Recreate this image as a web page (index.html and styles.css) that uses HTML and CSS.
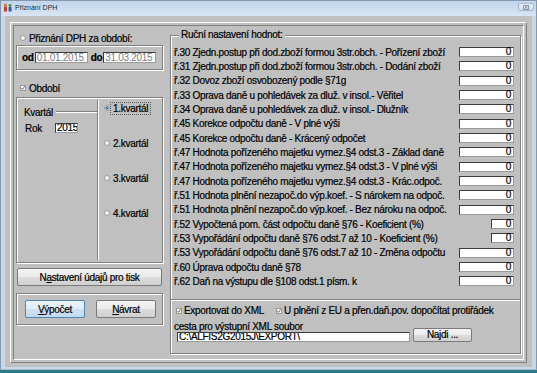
FILE: index.html
```html
<!doctype html>
<html lang="cs">

<head>
  <title>Přiznání DPH</title>
  <meta charset="utf-8">
  <link rel="stylesheet" href="styles.css">
</head>

<body>
  <div class="window">
    <div class="titlebar">
      <svg class="app-icon" width="10" height="9" viewBox="0 0 10 9">
        <circle cx="2.5" cy="2" r="1.5" fill="#d9772b" />
        <rect x="1" y="3.5" width="3" height="5" fill="#c0452a" />
        <circle cx="7" cy="2.5" r="1.4" fill="#3d8a3a" />
        <rect x="5.6" y="4" width="3" height="4.5" fill="#2d5fa8" />
      </svg>
      <span class="caption">Přiznání DPH</span>
      <div class="close">
        <svg width="6" height="5" viewBox="0 0 6 5">
          <rect x="0.5" y="0.5" width="5" height="4" fill="none" stroke="#8d9cae" />
          <path d="M1.5 1.2 L4.5 3.8 M4.5 1.2 L1.5 3.8" stroke="#6b7a8c" stroke-width="0.8" />
        </svg>
      </div>
    </div>

    <div class="client">
      <div class="frame">
        <div class="panel">

          <div class="left">
            <div class="opt-row">
              <span class="radio"></span>
              <span>Přiznání DPH za období:</span>
            </div>
            <div class="dates box">
              <b>od</b>
              <span class="edit date">01.01.2015</span>
              <b class="do">do</b>
              <span class="edit date">31.03.2015</span>
            </div>
            <div class="opt-row check-row">
              <svg class="check" width="6" height="6" viewBox="0 0 6 6">
                <rect x="0.5" y="0.5" width="5" height="5" fill="#f3f3f3" stroke="#9a9a9a" />
                <path d="M1.4 3 L2.6 4.3 L4.7 1.4" fill="none" stroke="#55606c" stroke-width="0.9" />
              </svg>
              <span>Období</span>
            </div>
            <div class="kvartal box">
              <div class="kv-left">
                <div class="kv-title"><span>Kvartál</span><span class="kv-line"></span></div>
                <div class="kv-rok"><span>Rok</span><span class="edit rok">2015</span></div>
              </div>
              <div class="kv-divider"></div>
              <div class="kv-right">
                <div class="kv-opt"><span class="radio on"></span><span class="kv-label focus">1.kvartál</span></div>
                <div class="kv-opt"><span class="radio"></span><span class="kv-label">2.kvartál</span></div>
                <div class="kv-opt"><span class="radio"></span><span class="kv-label">3.kvartál</span></div>
                <div class="kv-opt"><span class="radio"></span><span class="kv-label">4.kvartál</span></div>
              </div>
            </div>
            <button class="btn tisk">N<u>a</u>stavení údajů pro tisk</button>
            <div class="actions box">
              <button class="btn default"><u>V</u>ýpočet</button>
              <button class="btn"><u>N</u>ávrat</button>
            </div>
          </div>

          <div class="manual">
            <div class="legend">Ruční nastavení hodnot:</div>
            <div class="rows">
              <div class="row"><span class="lbl">ř.30 Zjedn.postup při dod.zboží formou 3str.obch. - Pořízení zboží</span><span class="val">0</span></div>
              <div class="row"><span class="lbl">ř.31 Zjedn.postup při dod.zboží formou 3str.obch. - Dodání zboží</span><span class="val">0</span></div>
              <div class="row"><span class="lbl">ř.32 Dovoz zboží osvobozený podle §71g</span><span class="val">0</span></div>
              <div class="row"><span class="lbl">ř.33 Oprava daně u pohledávek za dluž. v insol.- Věřitel</span><span class="val">0</span></div>
              <div class="row"><span class="lbl">ř.34 Oprava daně u pohledávek za dluž. v insol.- Dlužník</span><span class="val">0</span></div>
              <div class="row"><span class="lbl">ř.45 Korekce odpočtu daně - V plné výši</span><span class="val">0</span></div>
              <div class="row"><span class="lbl">ř.45 Korekce odpočtu daně - Krácený odpočet</span><span class="val">0</span></div>
              <div class="row"><span class="lbl">ř.47 Hodnota pořízeného majetku vymez.§4 odst.3 - Základ daně</span><span class="val">0</span></div>
              <div class="row"><span class="lbl">ř.47 Hodnota pořízeného majetku vymez.§4 odst.3 - V plné výši</span><span class="val">0</span></div>
              <div class="row"><span class="lbl">ř.47 Hodnota pořízeného majetku vymez.§4 odst.3 - Krác.odpoč.</span><span class="val">0</span></div>
              <div class="row"><span class="lbl">ř.51 Hodnota plnění nezapoč.do výp.koef. - S nárokem na odpoč.</span><span class="val">0</span></div>
              <div class="row"><span class="lbl">ř.51 Hodnota plnění nezapoč.do výp.koef. - Bez nároku na odpoč.</span><span class="val">0</span></div>
              <div class="row"><span class="lbl">ř.52 Vypočtená pom. část odpočtu daně §76 - Koeficient (%)</span><span class="val small">0</span></div>
              <div class="row"><span class="lbl">ř.53 Vypořádání odpočtu daně §76 odst.7 až 10 - Koeficient (%)</span><span class="val small">0</span></div>
              <div class="row"><span class="lbl">ř.53 Vypořádání odpočtu daně §76 odst.7 až 10 - Změna odpočtu</span><span class="val">0</span></div>
              <div class="row"><span class="lbl">ř.60 Úprava odpočtu daně §78</span><span class="val">0</span></div>
              <div class="row"><span class="lbl">ř.62 Daň na výstupu dle §108 odst.1 písm. k</span><span class="val">0</span></div>
            </div>
            <div class="sep"></div>
            <div class="export-row">
              <div class="cb-item first">
                <svg class="check" width="6" height="6" viewBox="0 0 6 6">
                  <rect x="0.5" y="0.5" width="5" height="5" fill="#f3f3f3" stroke="#9a9a9a" />
                  <path d="M1.4 3 L2.6 4.3 L4.7 1.4" fill="none" stroke="#55606c" stroke-width="0.9" />
                </svg>
                <span>Exportovat do XML</span>
              </div>
              <div class="cb-item">
                <svg class="check" width="6" height="6" viewBox="0 0 6 6">
                  <rect x="0.5" y="0.5" width="5" height="5" fill="#f3f3f3" stroke="#9a9a9a" />
                  <path d="M1.4 3 L2.6 4.3 L4.7 1.4" fill="none" stroke="#55606c" stroke-width="0.9" />
                </svg>
                <span>U plnění z EU a přen.daň.pov. dopočítat protiřádek</span>
              </div>
            </div>
            <div class="path">
              <span class="path-label">cesta pro výstupní XML soubor</span>
              <span class="edit path-edit">C:\ALFIS2G2015J\EXPORT\</span>
              <button class="btn najdi">Najdi ...</button>
            </div>
          </div>

        </div>
      </div>
    </div>
  </div>
</body>

</html>
```

FILE: styles.css
```css
html,
body {
  margin: 0;
  padding: 0;
}

body {
  width: 537px;
  height: 373px;
  overflow: hidden;
  background-color: #2c7888;
  font-family: "Liberation Sans", Arial, sans-serif;
  font-size: 10px;
  letter-spacing: -0.3px;
  color: #000000;
  white-space: nowrap;
  /* old bitmap UI font looks heavier than plain Arial */
  -webkit-text-stroke: 0.2px #000000;
}

/* window chrome */
.window {
  height: 370px;
  box-sizing: border-box;
  background-color: #c8d8e9;
  border: 1px solid #8499b0;
  border-bottom-color: #a9bccf;
  display: flex;
  flex-direction: column;
}

.titlebar {
  height: 15px;
  flex: none;
  display: flex;
  align-items: center;
  padding: 0 2px;
  background: linear-gradient(#c2d5ec, #d7e4f2);
}

.app-icon {
  flex: none;
  margin-top: -2px;
}

.caption {
  font-size: 7px;
  letter-spacing: 0;
  color: #1c2a3a;
  -webkit-text-stroke: 0;
  margin-left: 2px;
  margin-top: -2px;
}

.close {
  margin-left: auto;
  align-self: flex-start;
  margin-top: 2px;
  width: 16px;
  height: 8px;
  box-sizing: border-box;
  border: 1px solid #a7b8cc;
  border-radius: 2px;
  background: linear-gradient(#e9f0f8, #d3dfec);
  display: flex;
  align-items: center;
  justify-content: center;
}

.client {
  flex: 1;
  margin: 0 4px 2px;
  padding: 6px 5px 4px;
  background-color: #c0c0c0;
  display: flex;
}

.frame {
  flex: 1;
  display: flex;
  padding: 2px;
  border: 1px solid;
  border-color: #ffffff #808080 #808080 #ffffff;
}

.panel {
  flex: 1;
  display: flex;
  gap: 7px;
  padding: 0 2px 0 2px;
  border: 1px solid;
  border-color: #808080 #ffffff #ffffff #808080;
}

/* shared controls */
.box {
  box-sizing: border-box;
  border: 1px solid #808080;
  box-shadow: inset 1px 1px 0 #ffffff, 1px 1px 0 #ffffff;
}

.edit {
  box-sizing: border-box;
  display: block;
  background-color: #ffffff;
  border: 1px solid;
  border-color: #3c3c3c #9a9a9a #9a9a9a #3c3c3c;
  overflow: hidden;
}

.radio {
  flex: none;
  width: 6px;
  height: 6px;
  box-sizing: border-box;
  border: 1px solid #a2a2a2;
  border-radius: 50%;
  background: radial-gradient(circle, #ffffff, #dedede);
}

.radio.on {
  background: radial-gradient(circle, #3f74ad 0 1.3px, #e6e6e6 1.8px);
}

.check {
  flex: none;
  display: block;
}

.btn {
  font: inherit;
  letter-spacing: inherit;
  color: #000000;
  padding: 0;
  height: 18px;
  box-sizing: border-box;
  border: 1px solid #7a7a7a;
  border-radius: 2px;
  background: linear-gradient(#f3f3f3 0, #ebebeb 48%, #dcdcdc 52%, #d0d0d0 100%);
}

.btn.default {
  border-color: #4f86b4;
  background: linear-gradient(#eaf4fc 0, #e0edf8 48%, #cfe2f2 52%, #c2d9ee 100%);
}

/* left column */
.left {
  width: 147px;
  flex: none;
  display: flex;
  flex-direction: column;
}

.opt-row {
  height: 14px;
  margin-top: 5px;
  display: flex;
  align-items: center;
  padding-left: 4px;
  gap: 3px;
}

.dates {
  height: 25px;
  display: flex;
  align-items: center;
  padding-left: 5px;
}

.edit.date {
  width: 53px;
  height: 11px;
  margin-left: 1px;
  padding-left: 1px;
  line-height: 9px;
  color: #7c7c7c;
  -webkit-text-stroke: 0;
}

.do {
  margin-left: 3px;
}

.check-row {
  margin-top: 11px;
}

.kvartal {
  margin-top: 2px;
  height: 166px;
  display: flex;
}

.kv-left {
  width: 80px;
  flex: none;
  padding-top: 8px;
}

.kv-title {
  height: 12px;
  display: flex;
  align-items: center;
  padding-left: 7px;
}

.kv-line {
  flex: 1;
  margin-left: 3px;
  border-top: 1px solid #808080;
  border-bottom: 1px solid #ffffff;
}

.kv-rok {
  height: 12px;
  margin-top: 4px;
  display: flex;
  align-items: center;
  padding-left: 8px;
}

.edit.rok {
  width: 23px;
  height: 10px;
  margin-left: 13px;
  padding-left: 1px;
  line-height: 8px;
}

.kv-divider {
  margin: 2px 0;
  border-left: 1px solid #808080;
  border-right: 1px solid #ffffff;
}

.kv-right {
  padding: 3px 0 0 5px;
  display: flex;
  flex-direction: column;
  gap: 21px;
}

.kv-opt {
  height: 14px;
  display: flex;
  align-items: center;
}

.kv-label {
  border: 1px dotted transparent;
  padding: 0 2px;
  line-height: 11px;
}

.kv-label.focus {
  border-color: #5a5a5a;
}

.tisk {
  margin: 5px 0 0 1px;
  width: 145px;
}

.actions {
  margin-top: 7px;
  height: 32px;
  display: flex;
  align-items: center;
  gap: 11px;
  padding-left: 8px;
}

.actions .btn {
  width: 60px;
}

/* right group */
.manual {
  flex: 1;
  margin: 9px 0 5px;
  padding: 0 6px 0 3px;
  border: 1px solid #808080;
  box-shadow: inset 1px 1px 0 #ffffff, 1px 1px 0 #ffffff;
  display: flex;
  flex-direction: column;
}

.legend {
  align-self: flex-start;
  margin: -7px 0 0 5px;
  padding: 0 2px;
  height: 12px;
  line-height: 12px;
  background-color: #c0c0c0;
}

.rows {
  padding-top: 4px;
}

.row {
  height: 14.34px;
  display: flex;
  align-items: center;
}

.lbl {
  flex: 1;
}

.val {
  box-sizing: border-box;
  width: 55px;
  height: 10px;
  line-height: 8px;
  padding-right: 2px;
  text-align: right;
  background-color: #ffffff;
  border: 1px solid;
  border-color: #3c3c3c #9a9a9a #9a9a9a #3c3c3c;
}

.val.small {
  width: 23px;
}

.sep {
  margin: 10px -6px 0 -3px;
  border-top: 1px solid #808080;
  border-bottom: 1px solid #ffffff;
}

.export-row {
  margin-top: 3px;
  height: 14px;
  display: flex;
  align-items: center;
  padding-left: 2px;
}

.cb-item {
  display: flex;
  align-items: center;
  gap: 2px;
}

.cb-item.first {
  width: 100px;
}

.path {
  margin-top: 3px;
  display: grid;
  grid-template-columns: 236px 59px;
  grid-template-rows: 11px 10px;
  column-gap: 3px;
}

.path-label {
  line-height: 11px;
}

.path-edit {
  margin-left: 3px;
  height: 10px;
  line-height: 8px;
  padding-left: 1px;
}

.najdi {
  grid-column: 2;
  grid-row: 1 / 3;
  align-self: end;
  height: 14px;
}
```
